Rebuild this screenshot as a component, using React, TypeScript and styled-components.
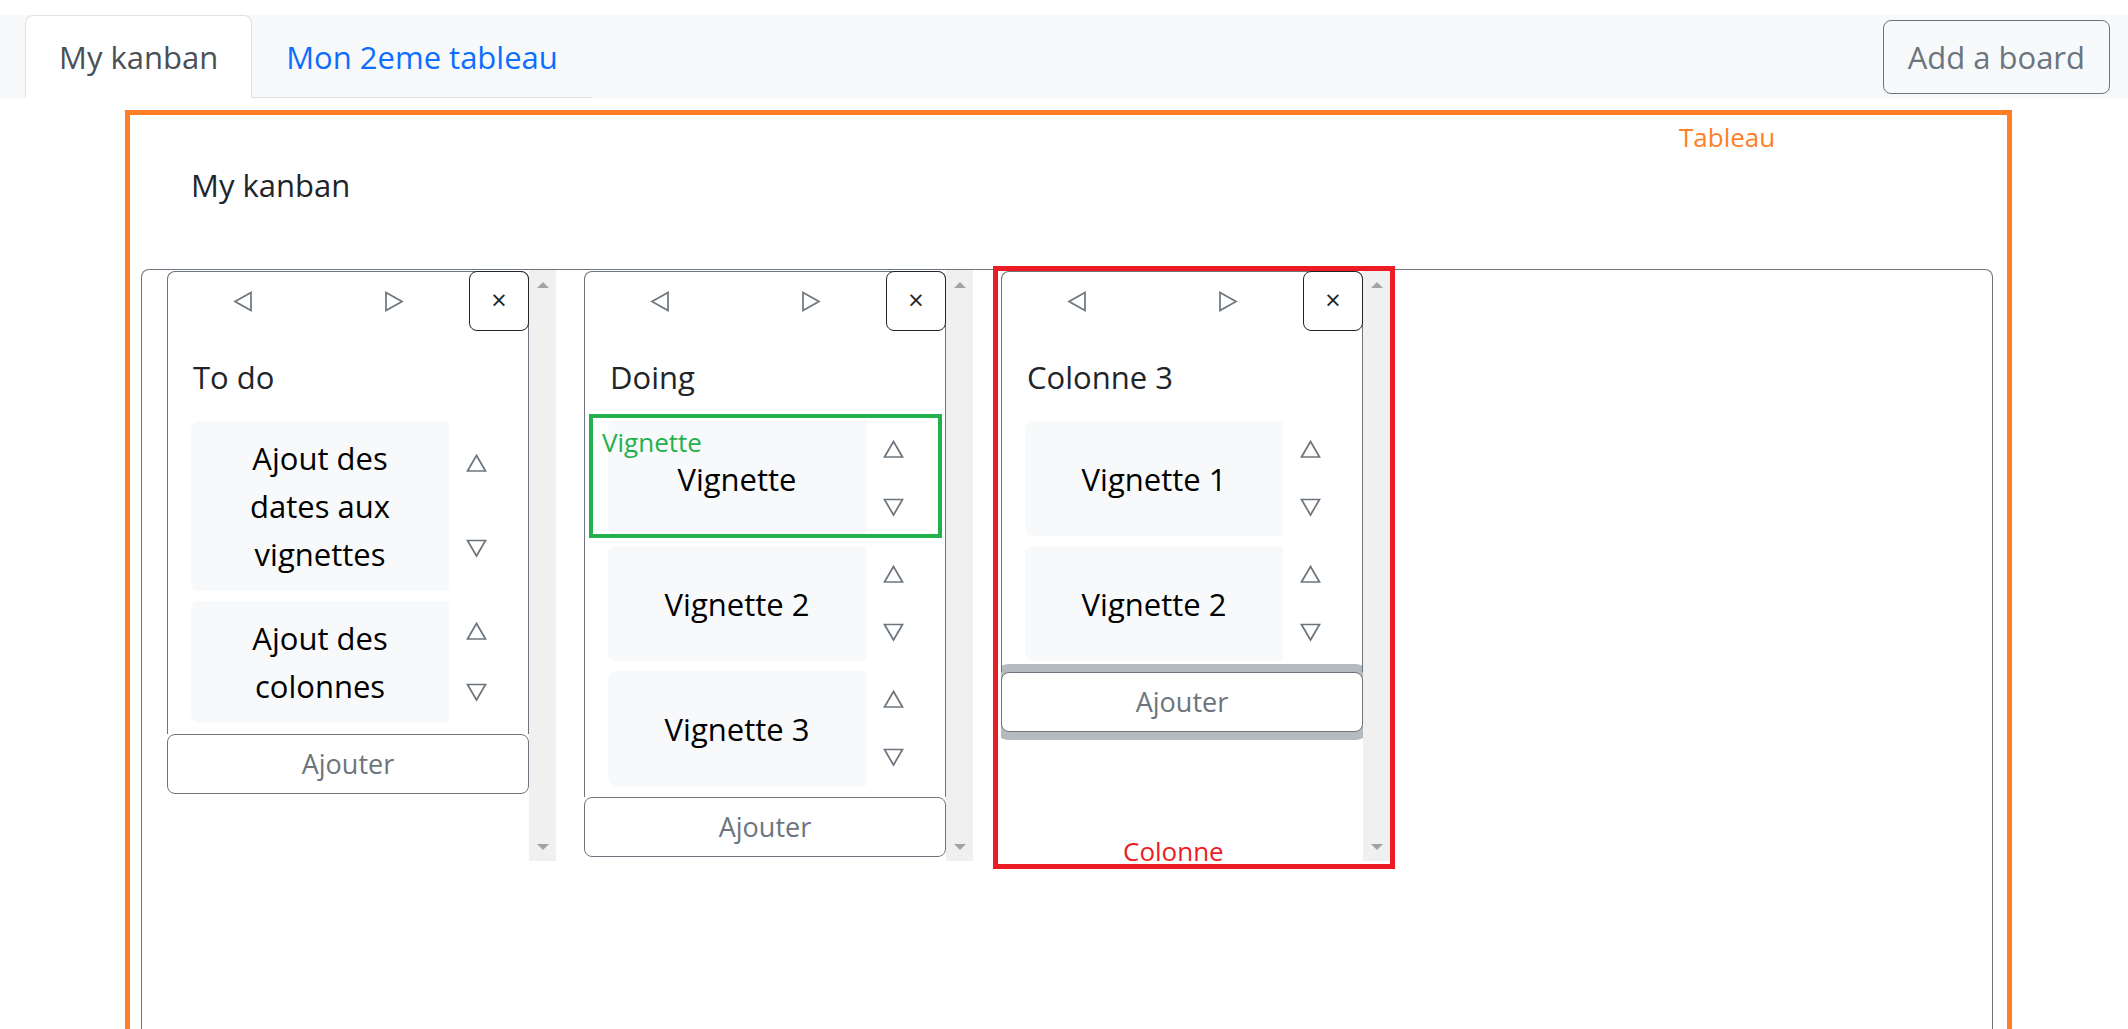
import React from 'react';
import styled, { createGlobalStyle } from 'styled-components';

const GlobalStyle = createGlobalStyle`
  html, body { margin: 0; padding: 0; background: #ffffff; }
  body {
    font-family: "Open Sans", "Noto Sans", "Liberation Sans", sans-serif;
    font-size: 31px;
    line-height: 48px;
    color: #212529;
  }
  *, *::before, *::after { box-sizing: border-box; }
`;

const Page = styled.div`
  height: 1029px;
  overflow: hidden;
  display: flex;
  flex-direction: column;
`;

const TopBar = styled.header`
  margin-top: 15px;
  flex: 0 0 83px;
  height: 83px;
  background: #f8f9fa;
  display: flex;
  align-items: center;
  justify-content: space-between;
  padding: 0 18px 0 25px;
`;

const Tabs = styled.nav`
  align-self: stretch;
  display: flex;
  align-items: flex-end;
  border-bottom: 1px solid #dee2e6;
`;

const Tab = styled.a<{ $active?: boolean }>`
  display: block;
  padding: 17px 33px 16px;
  margin-bottom: -1px;
  border: 1px solid transparent;
  border-radius: 8px 8px 0 0;
  line-height: 48px;
  text-decoration: none;
  cursor: pointer;
  color: ${(p) => (p.$active ? '#495057' : '#0d6efd')};
  background: ${(p) => (p.$active ? '#ffffff' : 'transparent')};
  border-color: ${(p) => (p.$active ? '#dee2e6 #dee2e6 #ffffff' : 'transparent')};
`;

const OutlineButton = styled.button`
  font-family: inherit;
  font-size: 31px;
  line-height: 48px;
  padding: 12px 24px;
  border: 1px solid #6c757d;
  border-radius: 8px;
  color: #6c757d;
  background: transparent;
  cursor: pointer;
`;

const BoardSection = styled.section`
  position: relative;
  flex: 1;
  margin: 12px 116px 0 125px;
  border: 5px solid #ff7f27;
  border-bottom: none;
  padding: 46px 14px 0 11px;
  display: flex;
  flex-direction: column;
`;

const BoardTitle = styled.h2`
  margin: 0 0 60px 50px;
  font-size: 31px;
  line-height: 48px;
  font-weight: 400;
  color: #212529;
`;

const ColumnsFrame = styled.div`
  flex: 1;
  display: flex;
  align-items: flex-start;
  gap: 28px;
  padding: 0 0 0 25px;
  border: 1px solid #6c757d;
  border-bottom: none;
  border-radius: 8px 8px 0 0;
`;

const Column = styled.div`
  position: relative;
  flex: 0 0 389px;
  height: 591px;
  display: flex;
`;

const Pane = styled.div`
  flex: 0 0 362px;
  display: flex;
  flex-direction: column;
  overflow: hidden;
  padding-top: 1px;
  background: #ffffff;
`;

const Card = styled.div`
  border: 1px solid #6c757d;
  border-bottom: none;
  border-radius: 8px 8px 0 0;
  background: #ffffff;
`;

const CardHeader = styled.div`
  display: flex;
  align-items: flex-start;
`;

const NavArrows = styled.div`
  flex: 1;
  height: 59px;
  display: flex;
  align-items: center;
  justify-content: space-around;
`;

const IconButton = styled.button`
  display: flex;
  align-items: center;
  justify-content: center;
  padding: 0;
  border: none;
  background: none;
  color: #6c757d;
  cursor: pointer;
`;

const CloseButton = styled.button`
  flex: 0 0 60px;
  width: 60px;
  height: 60px;
  margin: -1px -1px 0 0;
  display: flex;
  align-items: center;
  justify-content: center;
  padding: 0 0 3px;
  border: 1px solid #212529;
  border-radius: 8px;
  background: #ffffff;
  color: #212529;
  font-family: inherit;
  font-size: 27px;
  line-height: 1;
  cursor: pointer;
`;

const ColumnTitle = styled.h3`
  margin: 22px 0 20px 25px;
  font-size: 31px;
  line-height: 48px;
  font-weight: 400;
  color: #212529;
`;

const CardList = styled.div`
  display: flex;
  flex-direction: column;
  gap: 10px;
  padding: 0 25px 11px 23px;
`;

const VignetteRow = styled.div`
  position: relative;
  display: flex;
`;

const VignetteText = styled.div`
  flex: 0 0 258px;
  min-height: 115px;
  padding: 13px 24px;
  display: flex;
  align-items: center;
  justify-content: center;
  text-align: center;
  background: #f8f9fa;
  border-radius: 8px 0 0 8px;
  color: #000000;
  font-size: 31px;
  line-height: 48px;
`;

const MoveButtons = styled.div`
  flex: 1;
  display: flex;
  flex-direction: column;
  align-items: center;
  justify-content: space-around;
`;

const AddCardButton = styled.button<{ $focused?: boolean }>`
  flex: 0 0 60px;
  height: 60px;
  width: 100%;
  padding: 8px;
  border: 1px solid #6c757d;
  border-radius: 8px;
  background: #ffffff;
  color: #6c757d;
  font-family: inherit;
  font-size: 27px;
  line-height: 42px;
  cursor: pointer;
  box-shadow: ${(p) => (p.$focused ? '0 0 0 8px rgba(108, 117, 125, 0.5)' : 'none')};
`;

const Scrollbar = styled.div`
  flex: 0 0 27px;
  background: #f0f0f0;
  display: flex;
  flex-direction: column;
  align-items: center;
  justify-content: space-between;
  padding: 12px 0 11px;
`;

const ScrollArrow = styled.span<{ $down?: boolean }>`
  width: 0;
  height: 0;
  border-left: 6.5px solid transparent;
  border-right: 6.5px solid transparent;
  ${(p) =>
    p.$down ? 'border-top: 6px solid #a3a3a3;' : 'border-bottom: 6px solid #a3a3a3;'}
`;

const AnnotationFrame = styled.div<{ $color: string; $width: number }>`
  position: absolute;
  pointer-events: none;
  border: ${(p) => p.$width}px solid ${(p) => p.$color};
  z-index: 2;
`;

const AnnotationLabel = styled.span<{ $color: string }>`
  position: absolute;
  font-family: "Open Sans", "Noto Sans", sans-serif;
  font-size: 26px;
  line-height: 26px;
  white-space: nowrap;
  color: ${(p) => p.$color};
  z-index: 3;
`;

type Dir = 'left' | 'right' | 'up' | 'down';

const Triangle: React.FC<{ dir: Dir }> = ({ dir }) => {
  const horizontal = dir === 'left' || dir === 'right';
  const points: Record<Dir, string> = {
    left: '18,1.5 2,10.5 18,19.5',
    right: '2,1.5 18,10.5 2,19.5',
    up: '10.5,1.5 19.5,17 1.5,17',
    down: '1.5,1.5 19.5,1.5 10.5,17',
  };
  return horizontal ? (
    <svg width="20" height="21" viewBox="0 0 20 21" aria-hidden="true">
      <polygon points={points[dir]} fill="none" stroke="currentColor" strokeWidth="1.7" />
    </svg>
  ) : (
    <svg width="21" height="19" viewBox="0 0 21 19" aria-hidden="true">
      <polygon points={points[dir]} fill="none" stroke="currentColor" strokeWidth="1.7" />
    </svg>
  );
};

type ColumnData = {
  title: string;
  cards: string[];
  highlightFirstCard?: boolean;
  highlightColumn?: boolean;
  focusedAdd?: boolean;
};

const columns: ColumnData[] = [
  { title: 'To do', cards: ['Ajout des dates aux vignettes', 'Ajout des colonnes'] },
  { title: 'Doing', cards: ['Vignette', 'Vignette 2', 'Vignette 3'], highlightFirstCard: true },
  { title: 'Colonne 3', cards: ['Vignette 1', 'Vignette 2'], highlightColumn: true, focusedAdd: true },
];

const KanbanColumn: React.FC<{ data: ColumnData }> = ({ data }) => (
  <Column>
    <Pane>
      <Card>
        <CardHeader>
          <NavArrows>
            <IconButton aria-label="Déplacer à gauche">
              <Triangle dir="left" />
            </IconButton>
            <IconButton aria-label="Déplacer à droite">
              <Triangle dir="right" />
            </IconButton>
          </NavArrows>
          <CloseButton aria-label="Supprimer">×</CloseButton>
        </CardHeader>
        <ColumnTitle>{data.title}</ColumnTitle>
        <CardList>
          {data.cards.map((text, i) => (
            <VignetteRow key={text + i}>
              <VignetteText>{text}</VignetteText>
              <MoveButtons>
                <IconButton aria-label="Monter">
                  <Triangle dir="up" />
                </IconButton>
                <IconButton aria-label="Descendre">
                  <Triangle dir="down" />
                </IconButton>
              </MoveButtons>
              {data.highlightFirstCard && i === 0 && (
                <AnnotationFrame $color="#22b14c" $width={4} style={{ top: -7, left: -19, right: -22, bottom: -2 }}>
                  <AnnotationLabel $color="#22b14c" style={{ top: 11, left: 9 }}>
                    Vignette
                  </AnnotationLabel>
                </AnnotationFrame>
              )}
            </VignetteRow>
          ))}
        </CardList>
      </Card>
      <AddCardButton $focused={data.focusedAdd}>Ajouter</AddCardButton>
    </Pane>
    <Scrollbar>
      <ScrollArrow />
      <ScrollArrow $down />
    </Scrollbar>
    {data.highlightColumn && (
      <AnnotationFrame $color="#ed1c24" $width={5} style={{ top: -4, left: -8, right: -5, bottom: -8 }}>
        <AnnotationLabel $color="#ed1c24" style={{ bottom: 0, left: 125 }}>
          Colonne
        </AnnotationLabel>
      </AnnotationFrame>
    )}
  </Column>
);

export default function App() {
  return (
    <>
      <GlobalStyle />
      <Page>
        <TopBar>
          <Tabs>
            <Tab $active>My kanban</Tab>
            <Tab>Mon 2eme tableau</Tab>
          </Tabs>
          <OutlineButton>Add a board</OutlineButton>
        </TopBar>
        <BoardSection>
          <AnnotationLabel $color="#ff7f27" style={{ top: 9, left: 1549 }}>
            Tableau
          </AnnotationLabel>
          <BoardTitle>My kanban</BoardTitle>
          <ColumnsFrame>
            {columns.map((c) => (
              <KanbanColumn key={c.title} data={c} />
            ))}
          </ColumnsFrame>
        </BoardSection>
      </Page>
    </>
  );
}
